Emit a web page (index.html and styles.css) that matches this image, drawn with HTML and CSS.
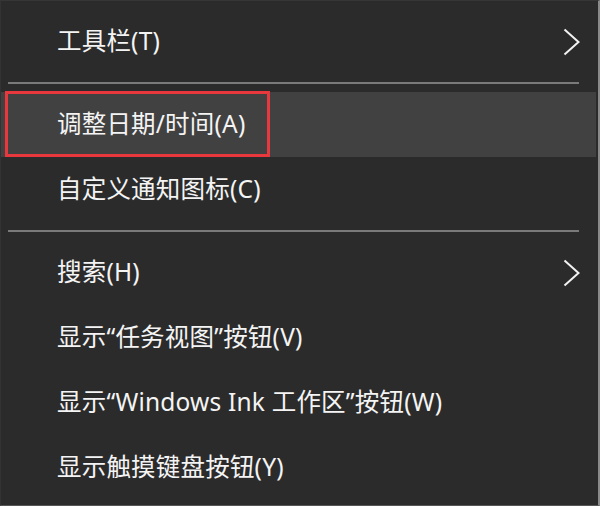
FILE: index.html
```html
<!DOCTYPE html>
<html lang="zh-CN">
<head>
<meta charset="utf-8">
<title>任务栏菜单</title>
<link rel="stylesheet" href="styles.css">
</head>
<body>
<div class="menu">
  <div class="item">
    <span class="label">工具栏(T)</span>
    <svg class="chev" width="17" height="28" viewBox="0 0 17 28"><polyline points="1.5,1.5 15.5,14 1.5,26.5" fill="none" stroke="#f2f2f2" stroke-width="2"/></svg>
  </div>
  <div class="sep"></div>
  <div class="item active">
    <span class="label">调整日期/时间(A)</span>
  </div>
  <div class="item">
    <span class="label">自定义通知图标(C)</span>
  </div>
  <div class="sep"></div>
  <div class="item">
    <span class="label">搜索(H)</span>
    <svg class="chev" width="17" height="28" viewBox="0 0 17 28"><polyline points="1.5,1.5 15.5,14 1.5,26.5" fill="none" stroke="#f2f2f2" stroke-width="2"/></svg>
  </div>
  <div class="item">
    <span class="label">显示“任务视图”按钮(V)</span>
  </div>
  <div class="item">
    <span class="label">显示“Windows Ink 工作区”按钮(W)</span>
  </div>
  <div class="item">
    <span class="label">显示触摸键盘按钮(Y)</span>
  </div>
</div>
</body>
</html>
```

FILE: styles.css
```css
html, body {
  margin: 0;
  padding: 0;
  background: #2b2b2b;
}

.menu {
  box-sizing: border-box;
  width: 600px;
  height: 506px;
  background: #2b2b2b;
  border-top: 1px solid #363636;
  border-left: 1px solid #333333;
  border-right: 2px solid #8a8a8a;
  border-bottom: 1px solid #555555;
  padding: 8px 2px 0 0;
  font-family: "Noto Sans", "Noto Sans CJK SC", sans-serif;
  color: #f4f4f4;
}

.item {
  position: relative;
  height: 65px;
  display: flex;
  align-items: center;
  justify-content: space-between;
  padding: 0 16px 0 56px;
}

.label {
  font-size: 24.5px;
  letter-spacing: 0.2px;
  line-height: 1;
  white-space: nowrap;
}

.chev {
  display: block;
}

.active {
  background: #414141;
}

.active::after {
  content: "";
  position: absolute;
  left: 4px;
  top: -1px;
  width: 259px;
  height: 60px;
  border: 3px solid #e8383e;
}

.sep {
  height: 18px;
  display: flex;
  align-items: center;
  padding: 0 17px 0 7px;
}

.sep::before {
  content: "";
  flex: 1;
  height: 2px;
  background: #7a7a7a;
}
```
